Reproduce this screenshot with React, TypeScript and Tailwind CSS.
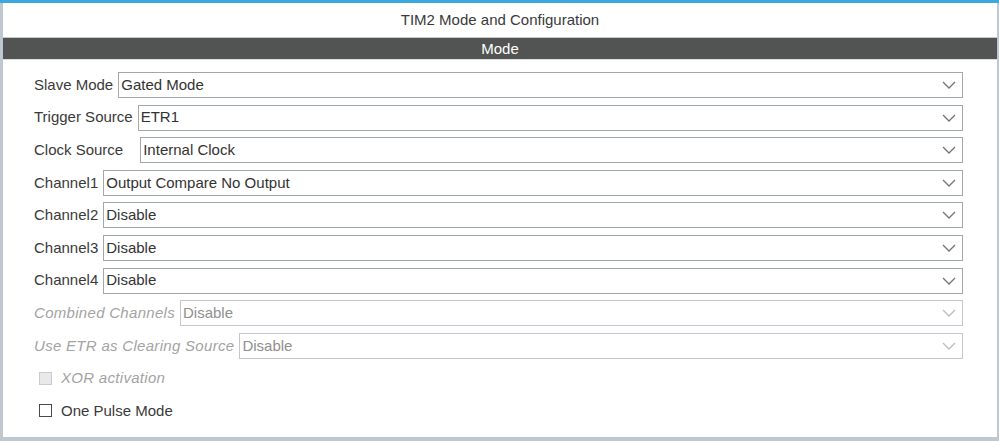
import React from "react";

const font = { fontFamily: '"Liberation Sans", Arial, sans-serif' };

type Row = { label: string; value: string; disabled?: boolean; gap?: string };

const rows: Row[] = [
  { label: "Slave Mode", value: "Gated Mode" },
  { label: "Trigger Source", value: "ETR1" },
  { label: "Clock Source", value: "Internal Clock", gap: "mr-[17px]" },
  { label: "Channel1", value: "Output Compare No Output" },
  { label: "Channel2", value: "Disable" },
  { label: "Channel3", value: "Disable" },
  { label: "Channel4", value: "Disable" },
  { label: "Combined Channels", value: "Disable", disabled: true },
  { label: "Use ETR as Clearing Source", value: "Disable", disabled: true },
];

function Chevron({ disabled }: { disabled?: boolean }) {
  return (
    <svg width="14" height="8" viewBox="0 0 14 8" className="shrink-0">
      <path
        d="M1 1 L7 7 L13 1"
        fill="none"
        stroke={disabled ? "#b9bec3" : "#6f757a"}
        strokeWidth="1.3"
      />
    </svg>
  );
}

function SelectRow({ row }: { row: Row }) {
  return (
    <div className="flex h-[26px] items-center">
      <span
        className={`whitespace-nowrap ${row.gap ?? "mr-[5px]"} ${
          row.disabled ? "italic tracking-[0.3px] text-[#a3a3a3]" : "text-[#3a3a3a]"
        }`}
      >
        {row.label}
      </span>
      <div
        className={`flex h-full flex-1 items-center justify-between border bg-white pl-[2px] pr-[6px] ${
          row.disabled ? "border-[#c4c8cc] text-[#8f8f8f]" : "border-[#a3a8ad] text-[#333]"
        }`}
      >
        <span>{row.value}</span>
        <Chevron disabled={row.disabled} />
      </div>
    </div>
  );
}

function Check({ label, disabled }: { label: string; disabled?: boolean }) {
  return (
    <div className="flex h-[26px] items-center pl-[5px]">
      <span
        className={`mr-[9px] h-[13px] w-[13px] border ${
          disabled ? "border-[#c9cbcd] bg-[#e9e9e9]" : "border-[#4a4a4a] bg-white"
        }`}
      />
      <span className={disabled ? "italic tracking-[0.3px] text-[#a3a3a3]" : "text-[#3a3a3a]"}>
        {label}
      </span>
    </div>
  );
}

export default function App() {
  return (
    <div className="flex h-[441px] w-[999px] flex-col bg-white text-[15px]" style={font}>
      <div className="h-[3px] bg-[#3aa8dc]" />
      <div className="flex flex-1 flex-col border-b-[4px] border-l-[3px] border-r-[2px] border-[#bfc8cf]">
        <div className="flex h-[35px] items-center justify-center border-b border-[#c8c8c8] pt-[1px] text-[#3a3a3a]">
          TIM2 Mode and Configuration
        </div>
        <div className="flex h-[22px] items-center justify-center border-b border-[#dcdcdc] bg-[#525453] pt-[1px] text-white">
          Mode
        </div>
        <div className="flex flex-col gap-[6.6px] pl-[31px] pr-[34px] pt-[12px]">
          {rows.map((r) => (
            <SelectRow key={r.label} row={r} />
          ))}
          <Check label="XOR activation" disabled />
          <Check label="One Pulse Mode" />
        </div>
      </div>
    </div>
  );
}
